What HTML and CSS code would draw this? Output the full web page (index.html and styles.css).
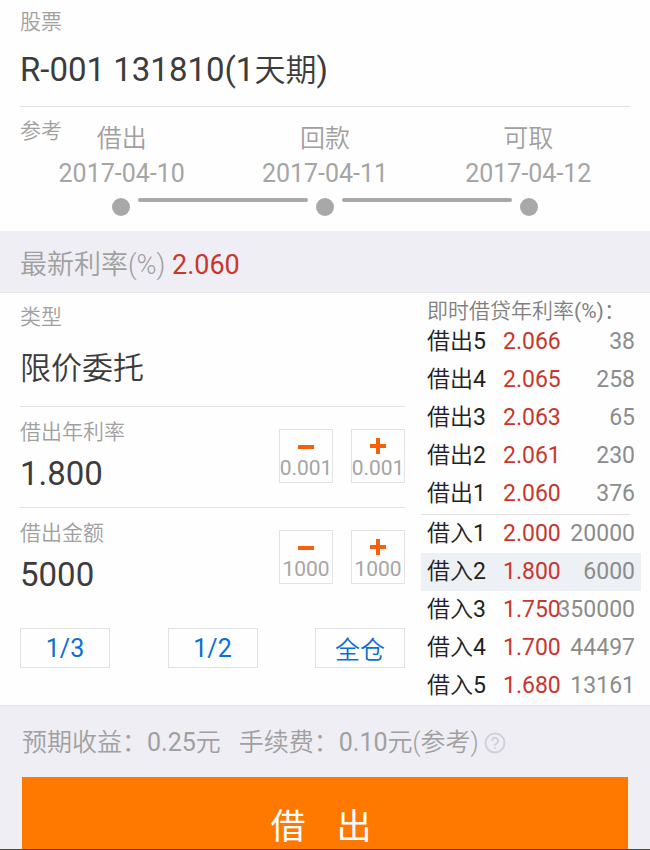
FILE: index.html
```html
<!DOCTYPE html>
<html lang="zh-CN">
<head>
  <meta charset="UTF-8" />
  <meta name="viewport" content="width=device-width, initial-scale=1" />
  <title>借出</title>
  <link rel="stylesheet" href="styles.css">
</head>
<body>
  <div class="app">
    <header class="stock">
      <div class="label">股票</div>
      <h1 class="stock-name">R-001 131810(1<span>天期</span>)</h1>
    </header>

    <section class="timeline">
      <div class="label timeline-label">参考</div>
      <ol class="steps">
        <li><span>借出</span><time>2017-04-10</time></li>
        <li><span>回款</span><time>2017-04-11</time></li>
        <li><span>可取</span><time>2017-04-12</time></li>
      </ol>
      <div class="track">
        <i class="dot"></i><i class="line"></i><i class="dot"></i><i class="line"></i><i class="dot"></i>
      </div>
    </section>

    <div class="latest">最新利率(%) <strong>2.060</strong></div>

    <main class="trade">
      <form class="order">
        <div class="field">
          <label class="label" for="type">类型</label>
          <select class="type" id="type">
            <option>限价委托</option>
          </select>
        </div>

        <div class="field field-step">
          <div class="field-main">
            <label class="label" for="rate">借出年利率</label>
            <input class="value" type="text" id="rate" value="1.800" />
          </div>
          <button class="step" type="button">
            <svg width="18" height="18" viewBox="0 0 18 18"><path d="M1 10h16" /></svg>
            0.001
          </button>
          <button class="step" type="button">
            <svg width="18" height="18" viewBox="0 0 18 18"><path d="M1 9h16M9 1v16" /></svg>
            0.001
          </button>
        </div>

        <div class="field field-step">
          <div class="field-main">
            <label class="label" for="amount">借出金额</label>
            <input class="value" type="text" id="amount" value="5000" />
          </div>
          <button class="step" type="button">
            <svg width="18" height="18" viewBox="0 0 18 18"><path d="M1 10h16" /></svg>
            1000
          </button>
          <button class="step" type="button">
            <svg width="18" height="18" viewBox="0 0 18 18"><path d="M1 9h16M9 1v16" /></svg>
            1000
          </button>
        </div>

        <div class="portions">
          <button class="portion" type="button">1/3</button>
          <button class="portion" type="button">1/2</button>
          <button class="portion" type="button">全仓</button>
        </div>
      </form>

      <section class="book">
        <h2 class="book-title">即时借贷年利率<b>(%)</b>：</h2>
        <table class="quotes">
          <tr><th>借出<b>5</b></th><td class="rate">2.066</td><td class="qty">38</td></tr>
          <tr><th>借出<b>4</b></th><td class="rate">2.065</td><td class="qty">258</td></tr>
          <tr><th>借出<b>3</b></th><td class="rate">2.063</td><td class="qty">65</td></tr>
          <tr><th>借出<b>2</b></th><td class="rate">2.061</td><td class="qty">230</td></tr>
          <tr><th>借出<b>1</b></th><td class="rate">2.060</td><td class="qty">376</td></tr>
        </table>
        <hr class="divider" />
        <table class="quotes">
          <tr><th>借入<b>1</b></th><td class="rate">2.000</td><td class="qty">20000</td></tr>
          <tr class="active"><th>借入<b>2</b></th><td class="rate">1.800</td><td class="qty">6000</td></tr>
          <tr><th>借入<b>3</b></th><td class="rate">1.750</td><td class="qty">350000</td></tr>
          <tr><th>借入<b>4</b></th><td class="rate">1.700</td><td class="qty">44497</td></tr>
          <tr><th>借入<b>5</b></th><td class="rate">1.680</td><td class="qty">13161</td></tr>
        </table>
      </section>
    </main>

    <footer class="summary">
      <div class="fees">
        <span>预期收益：<b>0.25</b>元</span>
        <span>手续费：<b>0.10</b>元(参考)</span>
        <svg class="help" width="22" height="22" viewBox="0 0 22 22">
          <circle cx="11" cy="11" r="9.5" />
          <path d="M8 8.800a3 3 0 1 1 4.600 2.500c-1 .7-1.600 1.200-1.600 2.500M11 15.200v1.600" />
        </svg>
      </div>
      <button class="submit" type="button"><span>借</span><span>出</span></button>
    </footer>
  </div>
</body>
</html>
```
FILE: styles.css
```css
* {
  box-sizing: border-box;
}
body {
  margin: 0;
  background: #efeef4;
  font-family: Roboto, "Noto Sans CJK SC", sans-serif;
  color: #3c3c3c;
}
button, input, select {
  font-family: inherit;
  border-radius: 0;
}
/* digits stay regular inside the lighter labels */
b {
  font-weight: 400;
}
.app {
  height: 100vh;
  overflow: hidden;
  border-bottom: 1px solid #4a4a4a;
  background: #fefefe;
}
.label {
  display: block;
  font-size: 21px;
  line-height: 24px;
  font-weight: 350;
  color: #a0a0a0;
}

/* stock */
.stock {
  margin: 0 20px;
  padding: 10px 0 15px;
  border-bottom: 1px solid #e2e2e2;
}
.stock-name {
  margin: 16px 0 0;
  font-size: 33px;
  line-height: 40px;
  font-weight: 400;
}
.stock-name span {
  font-size: 31px;
  font-weight: 350;
}

/* timeline */
.timeline {
  position: relative;
  padding: 14px 20px 15px;
}
.timeline-label {
  position: absolute;
  top: 12px;
  left: 20px;
}
.steps {
  display: grid;
  grid-template-columns: repeat(3, 1fr);
  margin: 0;
  padding: 0;
  list-style: none;
  text-align: center;
  font-size: 25px;
  line-height: 35px;
  color: #a5a5a5;
}
.steps span, .steps time {
  display: block;
}
.steps span {
  font-weight: 350;
  color: #a0a0a0;
}
.track {
  display: flex;
  padding: 7px 92px 0;
}
.dot {
  width: 18px;
  height: 18px;
  border-radius: 50%;
  background: #a8a8a8;
}
.line {
  flex: 1;
  height: 4px;
  margin: 0 8px;
  border-radius: 2px;
  background: #a8a8a8;
}

/* latest rate */
.latest {
  padding: 17px 20px 10px;
  border-bottom: 1px solid #e6e6ec;
  background: #efeef4;
  font-size: 27px;
  line-height: 34px;
  font-weight: 350;
  color: #a0a0a0;
}
.latest strong {
  font-weight: 400;
  color: #c8372d;
}

/* order form */
.trade {
  display: grid;
  grid-template-columns: 1fr 220px;
  gap: 16px;
  padding: 0 9px 0 20px;
}
.field {
  padding: 12px 0 18px;
  border-bottom: 1px solid #e2e2e2;
}
.field-step {
  display: flex;
  gap: 18px;
  height: 101px;
  padding: 13px 0 0;
}
.field-step + .field-step {
  border-bottom: 0;
}
.field-main {
  flex: 1;
  min-width: 0;
}
.type, .value {
  display: block;
  width: 100%;
  height: 40px;
  padding: 0;
  border: 0;
  background: none;
  appearance: none;
  color: #3c3c3c;
}
.type {
  margin-top: 19px;
  font-size: 31px;
  font-weight: 350;
}
.value {
  margin-top: 9px;
  font-size: 33px;
}
.step {
  display: flex;
  flex-direction: column;
  align-items: center;
  justify-content: center;
  width: 54px;
  height: 54px;
  margin-top: 9px;
  padding: 6px 0 0;
  border: 1px solid #e2e2e2;
  background: none;
  font-size: 21px;
  line-height: 27px;
  color: #a5a5a5;
}
.step svg {
  flex: none;
  stroke: #f4600c;
  stroke-width: 4;
}
.portions {
  display: flex;
  justify-content: space-between;
  padding-top: 19px;
}
.portion {
  width: 90px;
  height: 40px;
  padding: 0;
  border: 1px solid #e2e2e2;
  background: none;
  font-size: 25px;
  color: #0a6fd6;
}
.portion:last-child {
  font-weight: 350;
}

/* order book */
.book {
  padding: 7px 0 0;
}
.book-title {
  margin: 0;
  padding-left: 6px;
  font-size: 21px;
  line-height: 23px;
  font-weight: 350;
  color: #808080;
  white-space: nowrap;
}
.quotes {
  width: 100%;
  table-layout: fixed;
  border-collapse: collapse;
  font-size: 23px;
  line-height: 38px;
  white-space: nowrap;
}
.quotes th {
  width: 82px;
  padding: 0 0 0 6px;
  text-align: left;
  font-weight: 350;
  color: #222;
}
.quotes td {
  padding: 0;
}
.quotes .rate {
  width: 52px;
  color: #c8372d;
}
.quotes .qty {
  padding-right: 6px;
  text-align: right;
  color: #8c8c8c;
}
.active {
  background: #edf0f5;
}
.divider {
  height: 1px;
  margin: 1px 11px 0 0;
  border: 0;
  background: #e2e2e2;
}

/* footer */
.summary {
  height: 100%;
  padding: 20px 22px;
  border-top: 1px solid #e2e2e6;
  background: #efeef4;
}
.fees {
  display: flex;
  align-items: center;
  font-size: 25px;
  line-height: 34px;
  font-weight: 350;
  color: #a0a0a0;
}
.fees span + span {
  margin-left: 18px;
}
.help {
  margin-left: 5px;
  fill: none;
  stroke: #d3cfdf;
  stroke-width: 2;
}
.submit {
  display: flex;
  align-items: center;
  justify-content: center;
  gap: 31px;
  width: 100%;
  height: 92px;
  margin-top: 17px;
  padding: 0 8px 0 0;
  border: 0;
  background: #ff7900;
  font-size: 35px;
  color: #fff;
}
```
